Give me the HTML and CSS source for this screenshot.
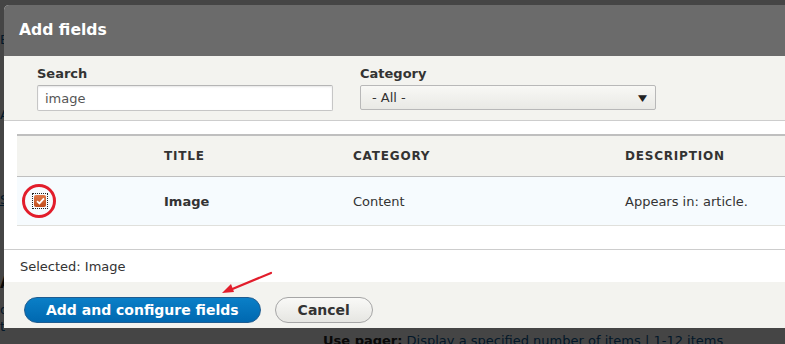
FILE: index.html
```html
<!DOCTYPE html>
<html lang="en">
<head>
    <meta charset="UTF-8">
    <title>Add fields</title>
    <link rel="stylesheet" href="styles.css">
</head>
<body>
    <!-- Page behind the dialog -->
    <div class="page">
        <p class="bg-line link l1">B</p>
        <p class="bg-line link l2">A</p>
        <p class="bg-line link l3"><u>S</u></p>
        <p class="bg-line strong l4">A</p>
        <p class="bg-line link l5">d</p>
        <p class="bg-line link l6">t</p>
        <p class="bg-line pager"><strong>Use pager:</strong> <span class="link">Display a specified number of items | 1-12 items</span></p>
    </div>

    <div class="overlay"></div>

    <!-- Dialog -->
    <div class="dialog">
        <div class="dialog-title">Add fields</div>

        <div class="filters">
            <div class="filter">
                <label for="search">Search</label>
                <input type="text" id="search" class="text-input" value="image">
            </div>
            <div class="filter">
                <label>Category</label>
                <div class="select">
                    <span>- All -</span>
                    <span class="caret">&#9660;</span>
                </div>
            </div>
        </div>

        <div class="results">
            <div class="table">
                <div class="tr head">
                    <div class="td c1"></div>
                    <div class="td c2">Title</div>
                    <div class="td c3">Category</div>
                    <div class="td c4">Description</div>
                </div>
                <div class="tr row">
                    <div class="td c1">
                        <span class="check-focus">
                            <span class="checkbox">
                                <svg width="9" height="8" viewBox="0 0 9 8"><path d="M1 4.2 L3.4 6.4 L8 1.4" fill="none" stroke="#fff" stroke-width="1.8"/></svg>
                            </span>
                        </span>
                        <span class="ring"></span>
                    </div>
                    <div class="td c2"><strong>Image</strong></div>
                    <div class="td c3">Content</div>
                    <div class="td c4">Appears in: article.</div>
                </div>
            </div>
        </div>

        <div class="selected">Selected: Image</div>

        <div class="actions">
            <button class="btn primary">Add and configure fields</button>
            <button class="btn">Cancel</button>
        </div>
    </div>

    <!-- Annotation arrow -->
    <svg class="arrow" width="60" height="30" viewBox="0 0 60 30">
        <path d="M53 3 L12 20" stroke="#e21d2b" stroke-width="2.2" fill="none" stroke-linecap="round"/>
        <path d="M4 23 L13 14 L16 22 Z" fill="#e21d2b"/>
    </svg>
</body>
</html>
```

FILE: styles.css
```css
/* General */
body {
    margin: 0;
    font-family: 'DejaVu Sans', 'Liberation Sans', sans-serif;
    font-size: 13px;
    color: #333;
    background: #fff;
    height: 344px;
    overflow: hidden;
}

/* Page behind the dialog */
.page {
    height: 344px;
}

.bg-line {
    margin: 0;
    height: 16px;
    line-height: 16px;
    white-space: nowrap;
}

.link {
    color: #0a5a96;
}

.strong {
    font-weight: bold;
    color: #222;
}

.l1 { padding-top: 32px; }
.l2 { margin-top: 59px; }
.l3 { margin-top: 69px; }
.l4 { margin-top: 67px; font-size: 15px; }
.l5 { margin-top: 11px; }
.l6 { margin-top: 1px; }

.pager {
    padding-left: 323px;
    margin-top: -2px;
    color: #222;
}

.overlay {
    position: fixed;
    inset: 0;
    background: rgba(0, 0, 0, 0.73);
}

/* Dialog */
.dialog {
    position: absolute;
    top: 5px;
    left: 4px;
    width: 820px;
    background: #fff;
    border-radius: 5px 0 0 0;
    overflow: hidden;
}

.dialog-title {
    height: 51px;
    line-height: 51px;
    padding-left: 15px;
    background: #6b6b6b;
    color: #fff;
    font-weight: bold;
    font-size: 15.6px;
}

.filters {
    display: flex;
    gap: 27px;
    padding: 10px 0 9px 33px;
    background: #f3f3ef;
    border-bottom: 1px solid #cdcdcd;
}

.filter {
    display: flex;
    flex-direction: column;
    gap: 3px;
    width: 296px;
}

.filter label {
    font-weight: bold;
    line-height: 16px;
    color: #333;
}

.text-input {
    box-sizing: border-box;
    width: 296px;
    height: 26px;
    margin: 0;
    padding: 0 7px;
    border: 1px solid #c6c6c6;
    border-top-color: #b5b5b5;
    border-radius: 2px;
    background: #fff;
    box-shadow: inset 0 1px 2px rgba(0, 0, 0, 0.1);
    font-family: inherit;
    font-size: 13px;
    color: #555;
}

.select {
    box-sizing: border-box;
    height: 25px;
    display: flex;
    align-items: center;
    justify-content: space-between;
    padding: 0 9px 0 11px;
    border: 1px solid #b8b8b8;
    border-radius: 2px;
    background: linear-gradient(#f8f8f5, #e9e9e5);
    color: #333;
}

.caret {
    font-size: 9px;
    color: #222;
    transform: scaleX(1.3);
}

/* Results table */
.results {
    padding: 13px 0 23px 13px;
    border-bottom: 1px solid #cdcdcd;
}

.tr {
    display: flex;
    align-items: center;
}

.head {
    height: 40px;
    border-top: 2px solid #bfbfbf;
    border-bottom: 1px solid #bfbfbf;
    background: #f3f3ef;
    font-weight: bold;
    font-size: 12px;
    letter-spacing: 0.8px;
    text-transform: uppercase;
}

.row {
    height: 48px;
    border-bottom: 1px solid #e0e0dc;
    background: #f6fbfe;
}

.td {
    box-sizing: border-box;
    padding-left: 12px;
    white-space: nowrap;
}

.c1 { width: 135px; position: relative; padding-left: 15px; }
.c2 { width: 189px; }
.c3 { width: 272px; }
.c4 { flex: 1; }

.check-focus {
    display: inline-flex;
    width: 16px;
    height: 16px;
    box-sizing: border-box;
    border: 1px dotted #222;
    align-items: center;
    justify-content: center;
    vertical-align: middle;
}

.checkbox {
    display: flex;
    align-items: center;
    justify-content: center;
    width: 12px;
    height: 12px;
    border-radius: 2px;
    background: linear-gradient(#e07a4a, #bf4e1e);
}

.ring {
    position: absolute;
    left: 5px;
    top: 50%;
    width: 28px;
    height: 28px;
    transform: translateY(-50%);
    border: 3px solid #e21d2b;
    border-radius: 50%;
}

.selected {
    padding: 9px 0 8px 16px;
    line-height: 15px;
    color: #333;
}

.actions {
    display: flex;
    gap: 14px;
    padding: 15px 0 5px 20px;
    height: 26px;
    background: #f3f3ef;
}

.btn {
    height: 26px;
    padding: 0 22px;
    border: 1px solid #a6a6a6;
    border-radius: 20px;
    background: linear-gradient(#f9f9f7, #e6e6e2);
    font-family: inherit;
    font-size: 14px;
    font-weight: bold;
    color: #333;
}

.primary {
    padding: 0 21px;
    border-color: #1e5c90;
    background: linear-gradient(#0a7fc7, #0068b0);
    color: #fff;
}

.arrow {
    position: absolute;
    left: 218px;
    top: 270px;
}
```
